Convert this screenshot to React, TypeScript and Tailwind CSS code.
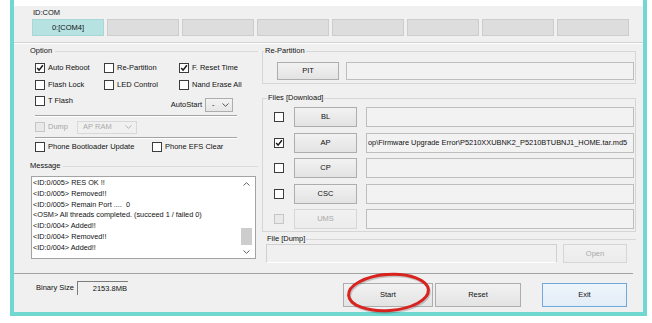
import React from "react";

function Check({ checked = false, disabled = false }: { checked?: boolean; disabled?: boolean }) {
  return (
    <span
      className={
        disabled
          ? "flex h-[10px] w-[10px] shrink-0 items-center justify-center border border-[#c6c6c6] bg-[#e9e9e9]"
          : "flex h-[10px] w-[10px] shrink-0 items-center justify-center border border-[#3c3c3c] bg-white"
      }
    >
      {checked && (
        <svg width="8" height="8" viewBox="0 0 8 8">
          <path d="M1.2 4.1 L3.1 6.1 L6.9 1.3" fill="none" stroke="#1a1a1a" strokeWidth="1.5" />
        </svg>
      )}
    </span>
  );
}

function CheckLabel({
  label,
  checked = false,
  disabled = false,
  className = "",
}: {
  label: string;
  checked?: boolean;
  disabled?: boolean;
  className?: string;
}) {
  return (
    <div className={"flex items-center gap-[3px] " + className}>
      <Check checked={checked} disabled={disabled} />
      <span className={disabled ? "text-[#a6a6a6]" : ""}>{label}</span>
    </div>
  );
}

function Chevron({ color = "#555555", up = false }: { color?: string; up?: boolean }) {
  return (
    <svg width="7" height="4" viewBox="0 0 7 4">
      <path
        d={up ? "M0.5 3.5 L3.5 0.7 L6.5 3.5" : "M0.5 0.5 L3.5 3.3 L6.5 0.5"}
        fill="none"
        stroke={color}
        strokeWidth="1"
      />
    </svg>
  );
}

function Btn({ label, className = "", disabled = false }: { label: string; className?: string; disabled?: boolean }) {
  return (
    <div
      className={
        "flex shrink-0 items-center justify-center border bg-linear-to-b " +
        (disabled
          ? "border-[#d6d6d6] from-[#f1f1f1] to-[#ececec] text-[#a9a9a9] "
          : "border-[#adadad] from-[#f2f2f2] to-[#e3e3e3] ") +
        className
      }
    >
      {label}
    </div>
  );
}

const messages = [
  "<ID:0/005> RES OK !!",
  "<ID:0/005> Removed!!",
  "<ID:0/005> Remain Port ....  0",
  "<OSM> All threads completed. (succeed 1 / failed 0)",
  "<ID:0/004> Added!!",
  "<ID:0/004> Removed!!",
  "<ID:0/004> Added!!",
];

const files: { name: string; checked: boolean; disabled: boolean; value: string }[] = [
  { name: "BL", checked: false, disabled: false, value: "" },
  {
    name: "AP",
    checked: true,
    disabled: false,
    value: "op\\Firmware Upgrade Error\\P5210XXUBNK2_P5210BTUBNJ1_HOME.tar.md5",
  },
  { name: "CP", checked: false, disabled: false, value: "" },
  { name: "CSC", checked: false, disabled: false, value: "" },
  { name: "UMS", checked: false, disabled: true, value: "" },
];

export default function App() {
  return (
    <div className="relative h-[323px] w-[652px] overflow-hidden bg-white font-['Liberation_Sans',Arial,sans-serif] text-[7.5px] text-[#111111]">
      <div className="ml-[10px] flex h-[316px] w-[637px] flex-col border-x-4 border-b-4 border-[#70d8d0]">
        <div className="h-[6px] bg-white" />
        <div className="flex flex-1 flex-col bg-[#f0f0f0]">
          {/* COM ports */}
          <div className="flex h-[37px] flex-col border-b border-[#d3d3d3]">
            <div className="h-[13px] pl-[19px] pt-[2px] leading-[10px]">ID:COM</div>
            <div className="flex h-[17px] gap-[3px] pl-[18px]">
              <div className="flex w-[72px] items-center justify-center border border-[#a9d6d6] bg-[#b6e2e2]">
                0:[COM4]
              </div>
              {[0, 1, 2, 3, 4, 5, 6].map((i) => (
                <div key={i} className="w-[72px] border border-[#cdcdcd] bg-[#dddddd]" />
              ))}
            </div>
          </div>
          <div className="h-px bg-white" />

          {/* Main */}
          <div className="flex h-[229px]">
            {/* Left panel */}
            <div className="ml-[11px] flex w-[233px] flex-col">
              <div className="mt-[1px] flex h-[12px] items-center">
                <span className="pl-[5px]">Option</span>
                <div className="ml-[3px] h-px flex-1 bg-[#dadada]" />
              </div>
              <div className="mt-[2px] flex h-[17px] items-center pl-[10px]">
                <CheckLabel label="Auto Reboot" checked className="w-[69px]" />
                <CheckLabel label="Re-Partition" className="w-[75px]" />
                <CheckLabel label="F. Reset Time" checked />
              </div>
              <div className="flex h-[17px] items-center pl-[10px]">
                <CheckLabel label="Flash Lock" className="w-[69px]" />
                <CheckLabel label="LED Control" className="w-[75px]" />
                <CheckLabel label="Nand Erase All" />
              </div>
              <div className="flex h-[19px] items-start pl-[10px]">
                <CheckLabel label="T Flash" className="h-[15px]" />
                <div className="ml-auto mr-[25px] mt-[5px] flex h-[14px] items-center">
                  <span>AutoStart</span>
                  <div className="ml-[3px] flex h-[14px] w-[28px] items-center justify-between border border-[#adadad] bg-linear-to-b from-[#f3f3f3] to-[#e6e6e6] pl-[6px] pr-[3px]">
                    <span>-</span>
                    <Chevron />
                  </div>
                </div>
              </div>
              <div className="ml-[10px] mt-[3px] h-px w-[202px] bg-[#a3a3a3]" />
              <div className="ml-[10px] h-px w-[202px] bg-white" />
              <div className="mt-[2px] flex h-[16px] items-center pl-[10px]">
                <CheckLabel label="Dump" disabled />
                <div className="ml-[9px] flex h-[13px] w-[60px] items-center justify-between border border-[#d8d8d8] bg-[#f0f0f0] pl-[5px] pr-[4px] text-[#ababab]">
                  <span>AP RAM</span>
                  <Chevron color="#b4b4b4" />
                </div>
              </div>
              <div className="ml-[10px] mt-[2px] h-px w-[202px] bg-[#a3a3a3]" />
              <div className="ml-[10px] h-px w-[202px] bg-white" />
              <div className="flex h-[16px] items-center pl-[10px]">
                <CheckLabel label="Phone Bootloader Update" className="w-[117px]" />
                <CheckLabel label="Phone EFS Clear" />
              </div>
              <div className="mt-[5px] flex h-[12px] items-center">
                <span className="pl-[5px]">Message</span>
                <div className="ml-[3px] h-px flex-1 bg-[#dadada]" />
              </div>
              <div className="ml-[6px] mt-[4px] flex h-[83px] w-[225px] border border-[#a3a3a3] bg-white">
                <div className="flex-1 whitespace-pre pl-[1px] pt-[1px] text-[7.3px] leading-[10.8px]">
                  {messages.map((m, i) => (
                    <div key={i}>{m}</div>
                  ))}
                </div>
                <div className="flex w-[16px] flex-col items-center pr-[2px]">
                  <div className="flex h-[14px] items-center justify-center">
                    <Chevron up color="#606060" />
                  </div>
                  <div className="flex w-full flex-1 flex-col items-center justify-end">
                    <div className="h-[17px] w-[11px] bg-[#cdcdcd]" />
                  </div>
                  <div className="flex h-[13px] items-center justify-center">
                    <Chevron color="#606060" />
                  </div>
                </div>
              </div>
            </div>

            {/* Right panel */}
            <div className="ml-[4px] flex w-[374px] flex-col">
              <fieldset className="mt-[1px] border border-[#d6d6d6]">
                <legend className="ml-[1px] px-[1px] leading-[12px]">Re-Partition</legend>
                <div className="flex pb-[3px] pl-[14px] pt-[5px]">
                  <Btn label="PIT" className="h-[18px] w-[62px]" />
                  <div className="ml-[7px] h-[18px] w-[288px] border border-[#bebebe] bg-[#f2f2f2]" />
                </div>
              </fieldset>

              <fieldset className="mt-[8px] border border-[#d6d6d6]">
                <legend className="ml-[4px] px-[1px] leading-[12px]">Files [Download]</legend>
                <div className="flex flex-col gap-[5.5px] pb-[2px] pt-[3px]">
                  {files.map((f) => (
                    <div key={f.name} className="flex h-[20px] items-center pl-[11px]">
                      <Check checked={f.checked} disabled={f.disabled} />
                      <Btn label={f.name} disabled={f.disabled} className="ml-[10px] h-[20px] w-[63px]" />
                      <div className="ml-[9px] flex h-[20px] w-[268px] items-center overflow-hidden whitespace-nowrap border border-[#bebebe] bg-[#f2f2f2] pl-[1px] text-[7.4px]">
                        {f.value}
                      </div>
                    </div>
                  ))}
                </div>
              </fieldset>

              <fieldset className="ml-[4px] mt-[1px] border-t border-[#d6d6d6]">
                <legend className="px-[1px] leading-[12px]">File [Dump]</legend>
                <div className="-mt-[1px] flex">
                  <div className="h-[19px] w-[291px] border border-[#d0d0d0] border-b-white bg-[#f0f0f0]" />
                  <Btn label="Open" disabled className="ml-[6px] h-[19px] w-[64px]" />
                </div>
              </fieldset>
            </div>
          </div>

          {/* Bottom */}
          <div className="mr-[10px] flex flex-1 items-start border-t border-[#a3a3a3]">
            <div className="ml-[22px] mt-[7px] flex h-[14px] items-center">
              <span>Binary Size</span>
              <div className="ml-[3px] flex h-[14px] w-[51px] items-center justify-end border-l border-t border-[#7c7c7c] pr-[1px]">
                2153.8MB
              </div>
            </div>
            <div className="ml-[215px] mt-[9px] flex">
              <Btn label="Start" className="h-[24px] w-[90px]" />
              <Btn label="Reset" className="ml-[2px] h-[24px] w-[86px]" />
              <div className="ml-[21px] flex h-[24px] w-[85px] items-center justify-center border border-[#6fa8dc] bg-linear-to-b from-[#eef5fc] to-[#e3edf7]">
                Exit
              </div>
            </div>
          </div>
        </div>
      </div>

      {/* red annotation circle */}
      <svg className="absolute left-[343px] top-[270px]" width="94" height="46" viewBox="0 0 94 46">
        <ellipse
          cx="46.5"
          cy="24"
          rx="40"
          ry="18"
          transform="rotate(-4 46.5 24)"
          fill="none"
          stroke="rgba(0,0,0,0.18)"
          strokeWidth="3"
        />
        <ellipse
          cx="45.5"
          cy="22.5"
          rx="40"
          ry="18"
          transform="rotate(-4 45.5 22.5)"
          fill="none"
          stroke="#d8231f"
          strokeWidth="3"
        />
        <path d="M30 6 Q40 3 52 4" fill="none" stroke="#d8231f" strokeWidth="1.5" />
      </svg>
    </div>
  );
}
